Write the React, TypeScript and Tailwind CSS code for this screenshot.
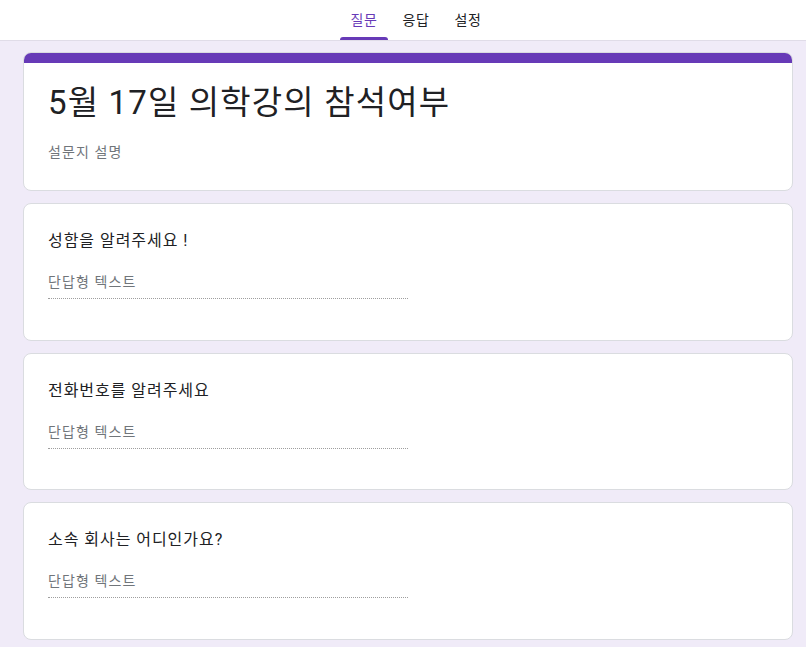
import React from "react";

const font = { fontFamily: "Roboto, 'Noto Sans CJK KR', 'Noto Sans', sans-serif" };

function QuestionCard({ title, h }: { title: string; h: string }) {
  return (
    <div className={`mt-[12px] ${h} w-[770px] rounded-lg border border-[#dadce0] bg-white pl-[24px] pt-[25px]`}>
      <div className="text-[16px] leading-[24px] tracking-[0.06em] text-[#202124]">{title}</div>
      <div className="mt-[19px] w-[360px] border-b border-dotted border-[#9e9e9e] pb-[6px] text-[14px] leading-[20px] tracking-[0.08em] text-[#70757a]">
        단답형 텍스트
      </div>
    </div>
  );
}

export default function App() {
  return (
    <div style={font} className="min-h-[647px] w-full overflow-hidden bg-[#f0ebf8]">
      <div className="flex h-[41px] justify-center border-b border-[#e0dce8] bg-white pl-[26px]">
        <div className="flex gap-[4px]">
          {["질문", "응답", "설정"].map((t, i) => (
            <div key={t} className="relative flex h-[40px] w-[48px] items-center justify-center">
              <span className={`text-[14px] tracking-[0.04em] ${i === 0 ? "text-[#673ab7]" : "text-[#202124]"}`}>{t}</span>
              {i === 0 && (
                <div className="absolute bottom-0 left-0 h-[3px] w-[48px] rounded-t-[3px] bg-[#673ab7]" />
              )}
            </div>
          ))}
        </div>
      </div>
      <div className="ml-[23px] pt-[11px] pb-[8px]">
        <div className="h-[139px] w-[770px] overflow-hidden rounded-lg border border-[#dadce0] bg-white">
          <div className="h-[10px] bg-[#673ab7]" />
          <div className="pl-[24px] pt-[20px]">
            <div className="text-[33px] leading-[40px] tracking-[0.035em] text-[#202124]">5월 17일 의학강의 참석여부</div>
            <div className="mt-[19px] text-[14px] leading-[20px] tracking-[0.08em] text-[#70757a]">설문지 설명</div>
          </div>
        </div>
        <QuestionCard h="h-[138px]" title="성함을 알려주세요 !" />
        <QuestionCard h="h-[137px]" title="전화번호를 알려주세요" />
        <QuestionCard h="h-[138px]" title="소속 회사는 어디인가요?" />
      </div>
    </div>
  );
}
